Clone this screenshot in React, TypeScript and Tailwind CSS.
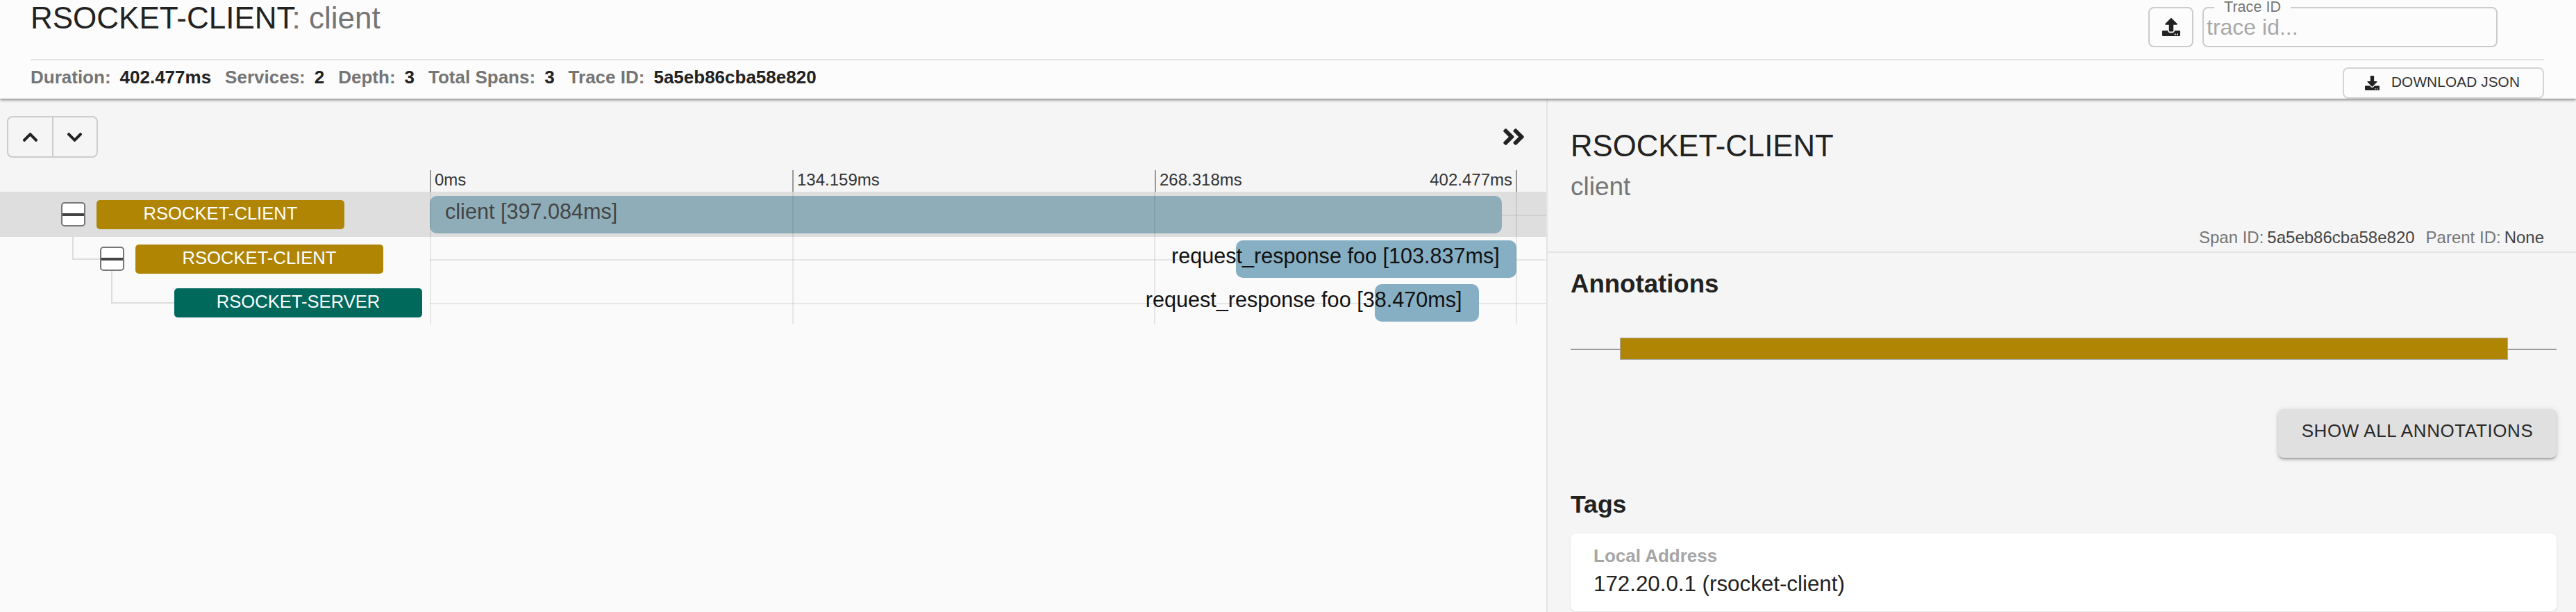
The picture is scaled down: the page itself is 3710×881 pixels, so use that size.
import React from 'react';
import { FaAngleDoubleRight, FaChevronDown, FaChevronUp, FaDownload, FaUpload } from 'react-icons/fa';

const GOLD = 'bg-[#b08504]';
const TEAL = 'bg-[#00695c]';

// px per ms on the timeline: 1565px wide for the full 402.477ms trace
const PX_PER_MS = 1565 / 402.477;

type SpanRow = {
  service: string;
  color: string;
  label: string;
  startMs: number;
  durationMs: number;
};

const spans: SpanRow[] = [
  { service: 'RSOCKET-CLIENT', color: GOLD, label: 'client [397.084ms]', startMs: 0, durationMs: 397.084 },
  { service: 'RSOCKET-CLIENT', color: GOLD, label: 'request_response foo [103.837ms]', startMs: 298.6, durationMs: 103.837 },
  { service: 'RSOCKET-SERVER', color: TEAL, label: 'request_response foo [38.470ms]', startMs: 350, durationMs: 38.47 },
];

function Stat(props: { label: string; value: string }) {
  return (
    <span className="flex gap-[13px]">
      <span className="text-[#757575]">{props.label}</span>
      <span className="text-[#222]">{props.value}</span>
    </span>
  );
}

function Toggle() {
  return (
    <div className="relative z-10 flex h-[35px] w-[35px] shrink-0 items-center rounded-[5px] border-2 border-[#777] bg-white">
      <div className="h-[4px] w-full bg-[#444]" />
    </div>
  );
}

function ServiceBadge(props: { name: string; color: string }) {
  return (
    <div
      className={`relative z-10 flex h-[42px] w-[357px] shrink-0 items-center justify-center rounded-[5px] pb-[4px] text-[25.6px] leading-[30px] text-white ${props.color}`}
    >
      {props.name}
    </div>
  );
}

function Header() {
  return (
    <header className="relative z-20 h-[142px] shrink-0 bg-[#fcfcfc] pl-[44px] pr-[46px] shadow-[0_2px_4px_rgba(0,0,0,0.45)]">
      <div className="flex h-[85px] items-start justify-between">
        <h1 className="pt-[1px] text-[44px] leading-[50px] text-[#222]">
          RSOCKET-CLIENT<span className="text-[#757575]">: client</span>
        </h1>
        <div className="mr-[67px] mt-[10px] flex gap-[13px]">
          <button className="flex h-[58px] w-[65px] items-center justify-center rounded-[8px] border-2 border-[#ccc] text-[#222]">
            <FaUpload className="h-[26px] w-[26px]" />
          </button>
          <div className="relative h-[58px] w-[425px] rounded-[8px] border-2 border-[#ccc]">
            <span className="absolute left-[15px] top-[-15px] bg-[#fcfcfc] px-[14px] text-[21.6px] leading-[26px] text-[#757575]">
              Trace ID
            </span>
            <div className="pl-[4px] pt-[9px] text-[32px] leading-[36px] text-[#a8a8a8]">trace id...</div>
          </div>
        </div>
      </div>
      <div className="h-[2px] bg-[#e4e4e4]" />
      <div className="flex items-start justify-between">
        <div className="mt-[9px] flex gap-[20px] text-[26px] font-bold leading-[30px]">
          <Stat label="Duration:" value="402.477ms" />
          <Stat label="Services:" value="2" />
          <Stat label="Depth:" value="3" />
          <Stat label="Total Spans:" value="3" />
          <Stat label="Trace ID:" value="5a5eb86cba58e820" />
        </div>
        <button className="mt-[10px] flex h-[45px] w-[290px] items-center rounded-[8px] border-2 border-[#d4d4d4] bg-[#fcfcfc] pl-[30px] text-[20.8px] leading-[26px] tracking-[0.1px] text-[#333]">
          <FaDownload className="mr-[17px] h-[21px] w-[21px] text-[#222]" />
          <span className="pb-[4px]">DOWNLOAD JSON</span>
        </button>
      </div>
    </header>
  );
}

function Timeline() {
  return (
    <section className="flex w-[2229px] shrink-0 flex-col border-r-2 border-[#e4e4e4]">
      <div className="flex h-[103px] shrink-0 items-start justify-between pl-[10px] pr-[28px] pt-[25px]">
        <div className="flex h-[60px] w-[131px] rounded-[8px] border-2 border-[#ccc] text-[#222]">
          <button className="flex flex-1 items-center justify-center border-r-2 border-[#ccc]">
            <FaChevronUp className="h-[25px] w-[25px]" />
          </button>
          <button className="flex flex-1 items-center justify-center">
            <FaChevronDown className="h-[25px] w-[25px]" />
          </button>
        </div>
        <FaAngleDoubleRight className="mt-[11px] h-[38px] w-[38px] text-[#222]" />
      </div>

      <div className="shrink-0 pl-[619px]">
        <div className="grid h-[31px] w-[1566px] grid-cols-3 text-[24px] leading-[28px] text-[#333]">
          <div className="border-l-2 border-[#999] pl-[5px]">0ms</div>
          <div className="border-l-2 border-[#999] pl-[5px]">134.159ms</div>
          <div className="flex justify-between border-x-2 border-[#999] px-[5px]">
            <span>268.318ms</span>
            <span>402.477ms</span>
          </div>
        </div>
      </div>

      <div className="relative flex-1 bg-[#fafafa]">
        {spans.map((span, i) => (
          <div
            key={i}
            className={`relative flex items-center ${i === 0 ? 'h-[65px] bg-[#dedede]' : 'h-[63px]'}`}
          >
            <div className={`absolute left-[619px] right-0 top-1/2 h-[2px] ${i === 0 ? 'bg-[#d0d0d0]' : 'bg-[#e6e6e6]'}`} />
            {i === 1 && (
              <div className="absolute left-[104px] top-[-14px] h-[47px] w-[40px] border-b-2 border-l-2 border-[#ddd]" />
            )}
            {i === 2 && (
              <div className="absolute left-[160px] top-[-14px] h-[47px] w-[91px] border-b-2 border-l-2 border-[#ddd]" />
            )}
            <div className="flex w-[619px] shrink-0 items-center gap-[16px]">
              {i === 0 && (
                <div className="ml-[88px] flex items-center gap-[16px]">
                  <Toggle />
                  <ServiceBadge name={span.service} color={span.color} />
                </div>
              )}
              {i === 1 && (
                <div className="ml-[144px] flex items-center gap-[16px]">
                  <Toggle />
                  <ServiceBadge name={span.service} color={span.color} />
                </div>
              )}
              {i === 2 && (
                <div className="ml-[251px]">
                  <ServiceBadge name={span.service} color={span.color} />
                </div>
              )}
            </div>
            <div
              className={`relative z-10 flex h-[54px] items-center whitespace-nowrap rounded-[10px] pb-[10px] text-[30.6px] leading-[34px] ${
                i === 0
                  ? 'justify-start bg-[#8fadb9] pl-[22px] text-[#444]'
                  : 'justify-end bg-[#86afc4] pr-[24px] text-[#111]'
              }`}
              style={{ marginLeft: span.startMs * PX_PER_MS, width: span.durationMs * PX_PER_MS }}
            >
              {span.label}
            </div>
          </div>
        ))}
        {[619, 1141, 1662, 2183].map((x) => (
          <div
            key={x}
            className="absolute top-0 z-20 h-[191px] w-[2px] bg-black/[0.08]"
            style={{ left: x }}
          />
        ))}
      </div>
    </section>
  );
}

function Detail() {
  return (
    <section className="min-w-0 flex-1">
      <div className="h-[222px] border-b-2 border-[#e4e4e4] pr-[46px]">
        <div className="pl-[33px] pt-[43px] text-[43.7px] leading-[50px] text-[#222]">RSOCKET-CLIENT</div>
        <div className="pl-[33px] pt-[13px] text-[37px] leading-[42px] text-[#757575]">client</div>
        <div className="mt-[38px] flex justify-end gap-[16px] text-[24px] leading-[28px] text-[#444]">
          <span className="flex gap-[5px]">
            <span className="text-[#757575]">Span ID:</span>5a5eb86cba58e820
          </span>
          <span className="flex gap-[5px]">
            <span className="text-[#757575]">Parent ID:</span>None
          </span>
        </div>
      </div>

      <div className="pl-[33px] pr-[28px]">
        <h2 className="pt-[24px] text-[36.6px] font-bold leading-[42px] text-[#222]">Annotations</h2>
        <div className="relative mt-[56px] h-[32px]">
          <div className="absolute left-0 right-0 top-1/2 h-[2px] bg-[#9a9a9a]" />
          <div className={`relative ml-[71px] h-[32px] w-[1279px] border border-[#aaa] ${GOLD}`} />
        </div>
        <div className="mt-[71px] flex justify-end">
          <button className="flex h-[70px] w-[401px] items-center justify-center rounded-[8px] bg-[#e0e0e0] pb-[8px] text-[26px] leading-[30px] tracking-[0.6px] text-[#2a2a2a] shadow-[0_3px_3px_-2px_rgba(0,0,0,0.3),0_3px_4px_rgba(0,0,0,0.14),0_1px_8px_rgba(0,0,0,0.12)]">
            SHOW ALL ANNOTATIONS
          </button>
        </div>
        <h2 className="pt-[46px] text-[35.6px] font-bold leading-[42px] text-[#222]">Tags</h2>
        <div className="mt-[21px] h-[112px] rounded-[8px] bg-white pl-[33px] pt-[17px] shadow-[0_1px_3px_rgba(0,0,0,0.12)]">
          <div className="text-[26px] font-bold leading-[30px] text-[#a6a6a6]">Local Address</div>
          <div className="pt-[7px] text-[31.3px] leading-[38px] text-[#222]">172.20.0.1 (rsocket-client)</div>
        </div>
      </div>
    </section>
  );
}

export default function App() {
  return (
    <div className="flex h-[881px] w-[3710px] flex-col overflow-hidden bg-[#f5f5f5] font-['Liberation_Sans',Arial,sans-serif]">
      <Header />
      <main className="flex min-h-0 flex-1">
        <Timeline />
        <Detail />
      </main>
    </div>
  );
}
